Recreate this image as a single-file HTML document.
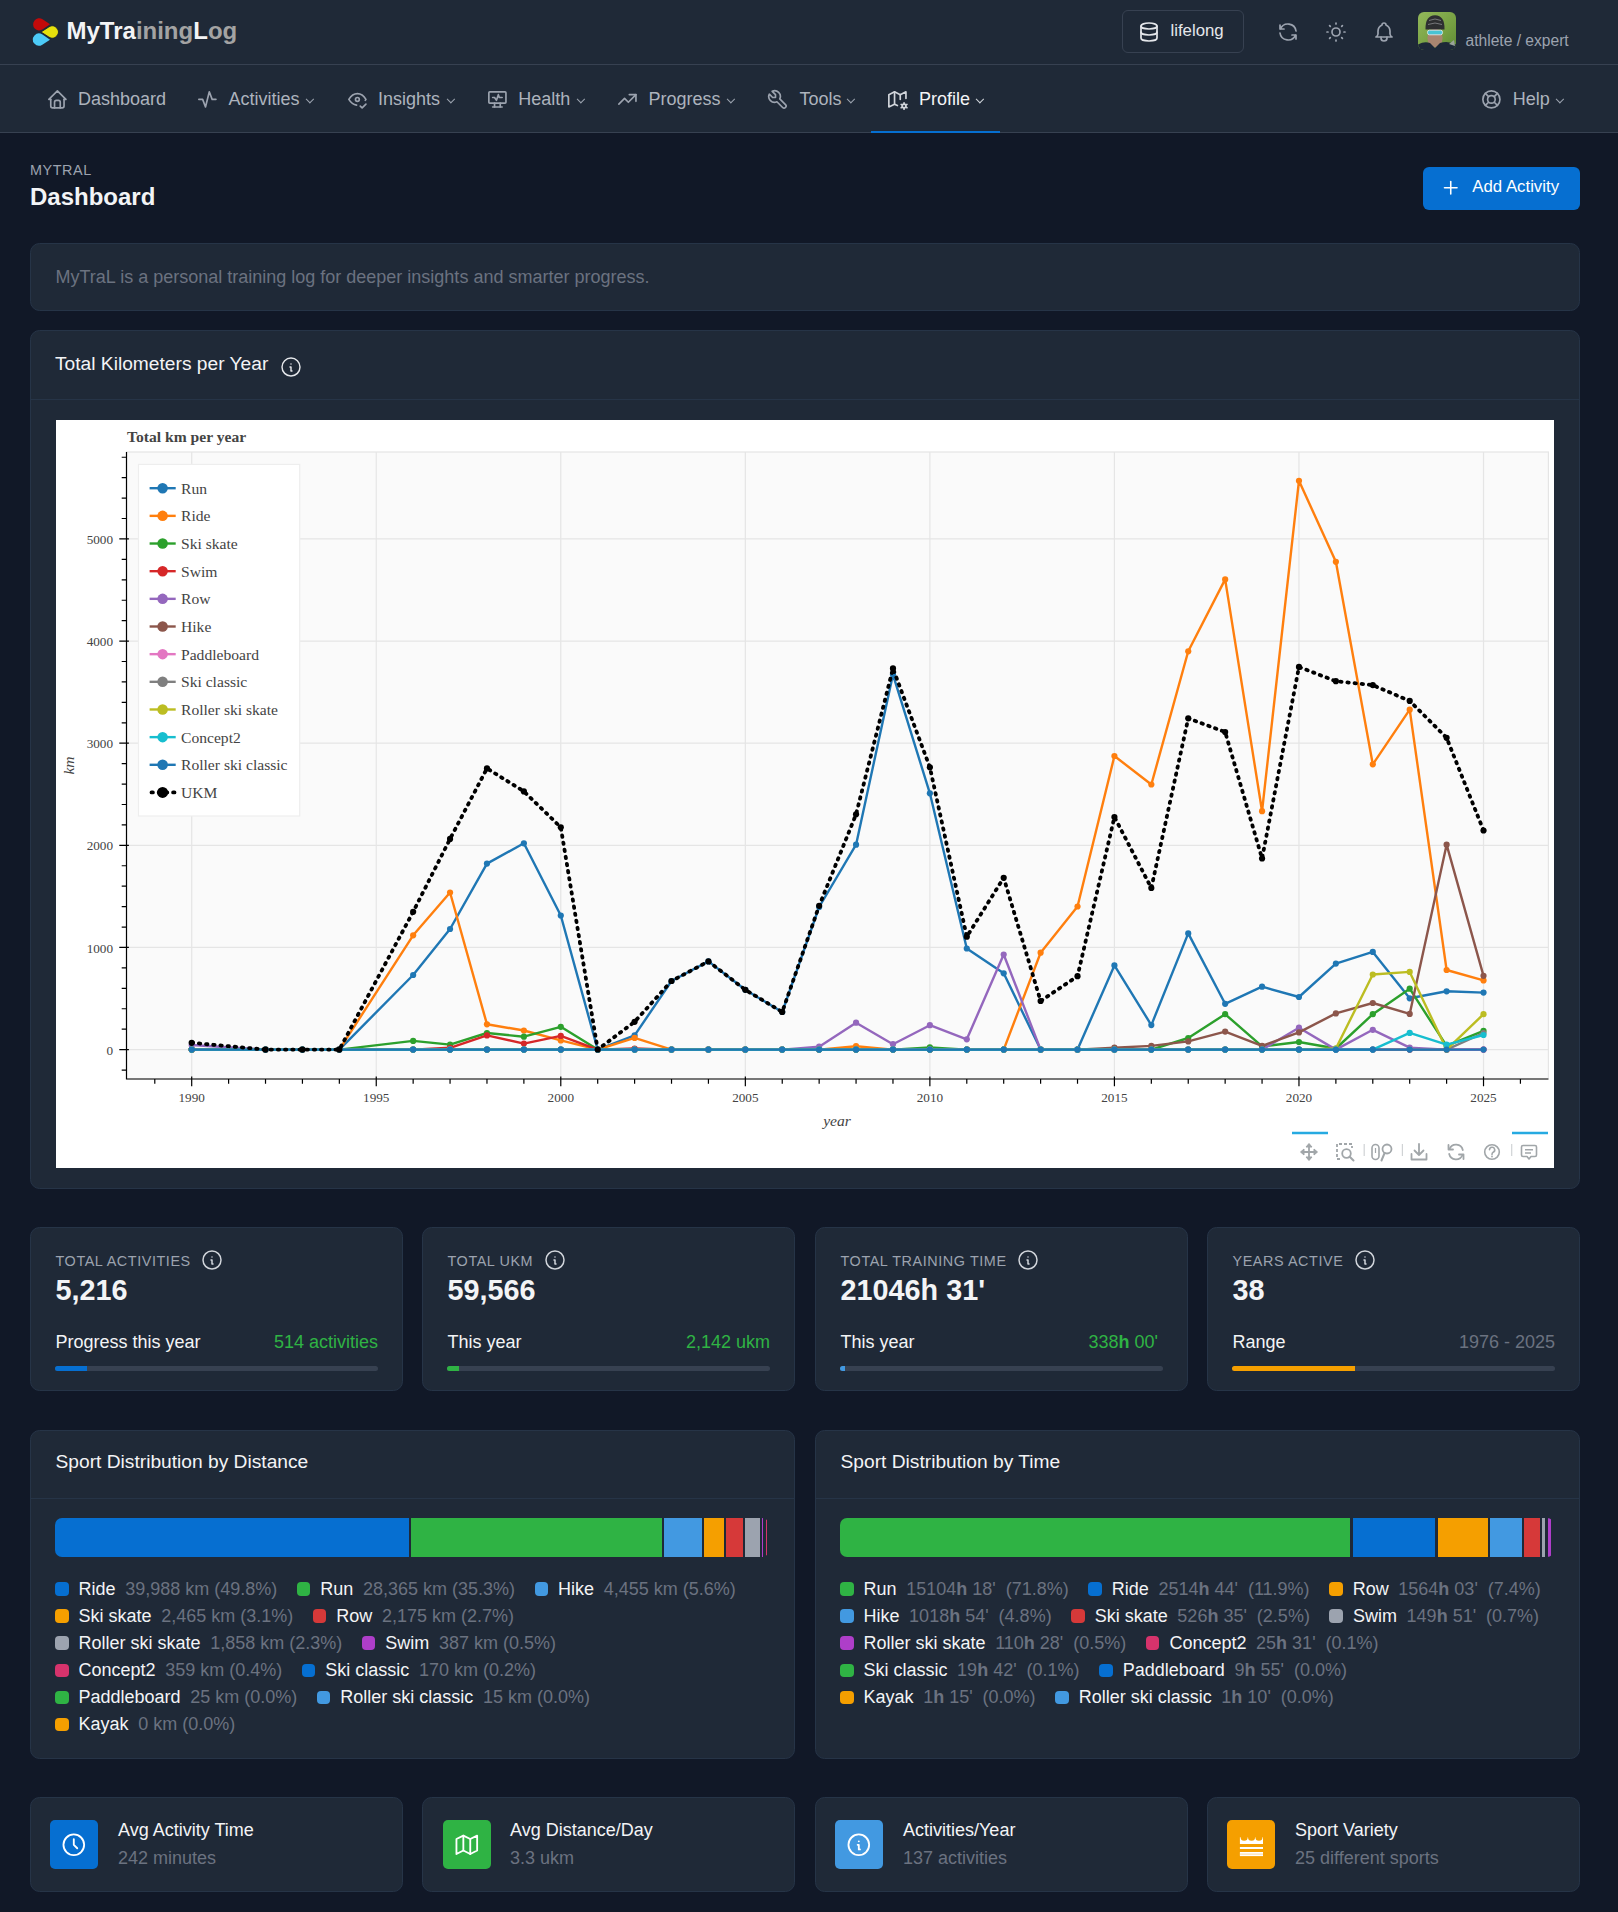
<!DOCTYPE html>
<html><head><meta charset="utf-8"><title>MyTrainingLog Dashboard</title>
<style>
html,body{margin:0;padding:0}
body{width:1618px;height:1912px;overflow:hidden;position:relative;background:#111827;font-family:'Liberation Sans', sans-serif;-webkit-font-smoothing:antialiased}
</style></head><body>
<div style="position:absolute;left:0px;top:0px;width:1618px;height:64px;background:#1f2937"></div>
<div style="position:absolute;left:0px;top:64px;width:1618px;height:1px;background:#374151"></div>
<div style="position:absolute;left:0px;top:65px;width:1618px;height:67px;background:#1f2937"></div>
<div style="position:absolute;left:0px;top:132px;width:1618px;height:1px;background:#374151"></div>
<svg style="position:absolute;left:0;top:0" width="80" height="64" viewBox="0 0 80 64"><path d="M50.00 24.20L42.74 29.37A6.1 6.1 0 1 1 42.55 19.30Z" fill="#c20a0a"/><path d="M50.00 39.70L42.29 44.64A6.1 6.1 0 1 1 42.47 34.49Z" fill="#4ccaf7"/><path d="M41.00 32.00L48.88 26.88A6.1 6.1 0 1 1 48.88 37.12Z" fill="#e5e00c" stroke="#172030" stroke-width="0.9"/></svg>
<div style="position:absolute;left:66.50px;top:18.88px;font-family:'Liberation Sans', sans-serif;font-size:24px;line-height:24px;font-weight:700;color:#f3f4f6;white-space:nowrap;"><span style="color:#f3f4f6">MyTra</span><span style="color:#a3a3a3">ining</span><span style="color:#f3f4f6">L</span><span style="color:#a3a3a3">og</span></div>
<div style="position:absolute;left:1122px;top:10px;width:122px;height:43px;box-sizing:border-box;border:1px solid #374151;border-radius:6px"></div>
<svg style="position:absolute;left:1137.00px;top:20.00px;" width="24" height="24" viewBox="0 0 24 24" fill="none" stroke="#e5e7eb" stroke-width="1.7" stroke-linecap="round" stroke-linejoin="round"><path d="M4 6a8 3 0 1 0 16 0a8 3 0 1 0 -16 0"/><path d="M4 6v6a8 3 0 0 0 16 0v-6"/><path d="M4 12v6a8 3 0 0 0 16 0v-6"/></svg>
<div style="position:absolute;left:1170.50px;top:22.58px;font-family:'Liberation Sans', sans-serif;font-size:16.8px;line-height:16.8px;font-weight:400;color:#e5e7eb;white-space:nowrap;">lifelong</div>
<svg style="position:absolute;left:1275.50px;top:20.00px;" width="24" height="24" viewBox="0 0 24 24" fill="none" stroke="#9ca3af" stroke-width="1.7" stroke-linecap="round" stroke-linejoin="round"><path d="M20 11a8.1 8.1 0 0 0 -15.5 -2m-.5 -4v4h4"/><path d="M4 13a8.1 8.1 0 0 0 15.5 2m.5 4v-4h-4"/></svg>
<svg style="position:absolute;left:1324.00px;top:20.00px;" width="24" height="24" viewBox="0 0 24 24" fill="none" stroke="#9ca3af" stroke-width="1.7" stroke-linecap="round" stroke-linejoin="round"><path d="M8 12a4 4 0 1 0 8 0a4 4 0 1 0 -8 0"/><path d="M3 12h1m8 -9v1m8 8h1m-9 8v1m-6.4 -15.4l.7 .7m12.1 -.7l-.7 .7m0 11.4l.7 .7m-12.1 -.7l-.7 .7"/></svg>
<svg style="position:absolute;left:1372.00px;top:20.00px;" width="24" height="24" viewBox="0 0 24 24" fill="none" stroke="#9ca3af" stroke-width="1.7" stroke-linecap="round" stroke-linejoin="round"><path d="M10 5a2 2 0 1 1 4 0a7 7 0 0 1 4 6v3a4 4 0 0 0 2 3h-16a4 4 0 0 0 2 -3v-3a7 7 0 0 1 4 -6"/><path d="M9 17v1a3 3 0 0 0 6 0v-1"/></svg>
<svg style="position:absolute;left:1418px;top:12px" width="38" height="38" viewBox="0 0 38 38"><defs><linearGradient id="gr" x1="0" y1="0" x2="1" y2="1"><stop offset="0" stop-color="#93b85a"/><stop offset="0.6" stop-color="#76a042"/><stop offset="1" stop-color="#5e8a34"/></linearGradient><clipPath id="avc"><rect width="38" height="38" rx="6"/></clipPath></defs><g clip-path="url(#avc)"><rect width="38" height="38" fill="url(#gr)"/><ellipse cx="17" cy="26" rx="7.6" ry="9.5" fill="#a88570"/><path d="M7.5 17.5Q7 3.5 17 3.2Q27 3.5 26.5 17.5Z" fill="#2e2f31"/><path d="M11 8.5Q17 5.5 23 8.5M10 12.5Q17 9.5 24 12.5" stroke="#77797c" stroke-width="1" fill="none"/><rect x="9.5" y="18.2" width="15" height="4.6" rx="2" fill="#48c4d4" stroke="#e8eef0" stroke-width="0.8"/><path d="M-1 39V33Q6 29 12 31L17 36L22 31Q30 28 39 33V39Z" fill="#1d2838"/><path d="M31 32l5 -4l1 6z" fill="#9aa39a"/></g></svg>
<div style="position:absolute;left:1465.50px;top:33.49px;font-family:'Liberation Sans', sans-serif;font-size:15.6px;line-height:15.6px;font-weight:400;color:#9ca3af;white-space:nowrap;">athlete / expert</div>
<svg style="position:absolute;left:45.80px;top:87.60px;" width="22.8" height="22.8" viewBox="0 0 24 24" fill="none" stroke="#9ca3af" stroke-width="1.75" stroke-linecap="round" stroke-linejoin="round"><path d="M5 12l-2 0l9 -9l9 9l-2 0"/><path d="M5 12v7a2 2 0 0 0 2 2h10a2 2 0 0 0 2 -2v-7"/><path d="M9 21v-6a2 2 0 0 1 2 -2h2a2 2 0 0 1 2 2v6"/></svg>
<div style="position:absolute;left:78.00px;top:89.76px;font-family:'Liberation Sans', sans-serif;font-size:18px;line-height:18px;font-weight:400;color:#adb3bd;white-space:nowrap;">Dashboard</div>
<svg style="position:absolute;left:195.60px;top:87.60px;" width="22.8" height="22.8" viewBox="0 0 24 24" fill="none" stroke="#9ca3af" stroke-width="1.75" stroke-linecap="round" stroke-linejoin="round"><path d="M3 12h4l3 8l4 -16l3 8h4"/></svg>
<div style="position:absolute;left:228.50px;top:89.76px;font-family:'Liberation Sans', sans-serif;font-size:18px;line-height:18px;font-weight:400;color:#adb3bd;white-space:nowrap;">Activities</div>
<div style="position:absolute;left:307.10px;top:95.50px;width:6.48px;height:6.48px;border-left:1.2px solid #9ca3af;border-bottom:1.2px solid #9ca3af;transform:rotate(-45deg);box-sizing:border-box"></div>
<svg style="position:absolute;left:346.00px;top:87.60px;" width="22.8" height="22.8" viewBox="0 0 24 24" fill="none" stroke="#9ca3af" stroke-width="1.75" stroke-linecap="round" stroke-linejoin="round"><path d="M10 12a2 2 0 1 0 4 0a2 2 0 0 0 -4 0"/><path d="M11.143 17.961c-3.221 -.295 -5.936 -2.281 -8.143 -5.961c2.4 -4 5.4 -6 9 -6c3.6 0 6.6 2 9 6c-.222 .37 -.449 .722 -.68 1.057"/><path d="M15 19l2 2l4 -4"/></svg>
<div style="position:absolute;left:378.00px;top:89.76px;font-family:'Liberation Sans', sans-serif;font-size:18px;line-height:18px;font-weight:400;color:#adb3bd;white-space:nowrap;">Insights</div>
<div style="position:absolute;left:447.80px;top:95.50px;width:6.48px;height:6.48px;border-left:1.2px solid #9ca3af;border-bottom:1.2px solid #9ca3af;transform:rotate(-45deg);box-sizing:border-box"></div>
<svg style="position:absolute;left:485.60px;top:87.60px;" width="22.8" height="22.8" viewBox="0 0 24 24" fill="none" stroke="#9ca3af" stroke-width="1.75" stroke-linecap="round" stroke-linejoin="round"><path d="M3 5a1 1 0 0 1 1 -1h16a1 1 0 0 1 1 1v10a1 1 0 0 1 -1 1h-16a1 1 0 0 1 -1 -1z"/><path d="M7 20h10"/><path d="M9 16v4"/><path d="M15 16v4"/><path d="M7 10h2l2 3l2 -6l1 3h3"/></svg>
<div style="position:absolute;left:518.30px;top:89.76px;font-family:'Liberation Sans', sans-serif;font-size:18px;line-height:18px;font-weight:400;color:#adb3bd;white-space:nowrap;">Health</div>
<div style="position:absolute;left:578.00px;top:95.50px;width:6.48px;height:6.48px;border-left:1.2px solid #9ca3af;border-bottom:1.2px solid #9ca3af;transform:rotate(-45deg);box-sizing:border-box"></div>
<svg style="position:absolute;left:615.60px;top:87.60px;" width="22.8" height="22.8" viewBox="0 0 24 24" fill="none" stroke="#9ca3af" stroke-width="1.75" stroke-linecap="round" stroke-linejoin="round"><path d="M3 17l6 -6l4 4l8 -8"/><path d="M14 7l7 0l0 7"/></svg>
<div style="position:absolute;left:648.60px;top:89.76px;font-family:'Liberation Sans', sans-serif;font-size:18px;line-height:18px;font-weight:400;color:#adb3bd;white-space:nowrap;">Progress</div>
<div style="position:absolute;left:727.60px;top:95.50px;width:6.48px;height:6.48px;border-left:1.2px solid #9ca3af;border-bottom:1.2px solid #9ca3af;transform:rotate(-45deg);box-sizing:border-box"></div>
<svg style="position:absolute;left:765.60px;top:87.60px;" width="22.8" height="22.8" viewBox="0 0 24 24" fill="none" stroke="#9ca3af" stroke-width="1.75" stroke-linecap="round" stroke-linejoin="round"><path d="M7 10h3v-3l-3.5 -3.5a6 6 0 0 1 8 8l6 6a2 2 0 0 1 -3 3l-6 -6a6 6 0 0 1 -8 -8l3.5 3.5"/></svg>
<div style="position:absolute;left:799.60px;top:89.76px;font-family:'Liberation Sans', sans-serif;font-size:18px;line-height:18px;font-weight:400;color:#adb3bd;white-space:nowrap;">Tools</div>
<div style="position:absolute;left:847.70px;top:95.50px;width:6.48px;height:6.48px;border-left:1.2px solid #9ca3af;border-bottom:1.2px solid #9ca3af;transform:rotate(-45deg);box-sizing:border-box"></div>
<svg style="position:absolute;left:885.60px;top:87.60px;" width="22.8" height="22.8" viewBox="0 0 24 24" fill="none" stroke="#d1d5db" stroke-width="1.75" stroke-linecap="round" stroke-linejoin="round"><path d="M12 18.5l-3 -1.5l-6 3v-13l6 -3l6 3l6 -3v7"/><path d="M9 4v13"/><path d="M15 7v5"/><path d="M17.001 19a2 2 0 1 0 4 0a2 2 0 1 0 -4 0"/><path d="M19.001 15.5v1.5"/><path d="M19.001 21v1.5"/><path d="M22.032 17.25l-1.299 .75"/><path d="M17.27 20l-1.3 .75"/><path d="M15.97 17.25l1.3 .75"/><path d="M20.733 20l1.3 .75"/></svg>
<div style="position:absolute;left:919.00px;top:89.76px;font-family:'Liberation Sans', sans-serif;font-size:18px;line-height:18px;font-weight:400;color:#f3f4f6;white-space:nowrap;">Profile</div>
<div style="position:absolute;left:977.00px;top:95.50px;width:6.48px;height:6.48px;border-left:1.2px solid #d1d5db;border-bottom:1.2px solid #d1d5db;transform:rotate(-45deg);box-sizing:border-box"></div>
<svg style="position:absolute;left:1479.60px;top:87.60px;" width="22.8" height="22.8" viewBox="0 0 24 24" fill="none" stroke="#9ca3af" stroke-width="1.75" stroke-linecap="round" stroke-linejoin="round"><path d="M8 12a4 4 0 1 0 8 0a4 4 0 1 0 -8 0"/><path d="M3 12a9 9 0 1 0 18 0a9 9 0 1 0 -18 0"/><path d="M15 15l3.35 3.35"/><path d="M9 15l-3.35 3.35"/><path d="M5.65 5.65l3.35 3.35"/><path d="M18.35 5.65l-3.35 3.35"/></svg>
<div style="position:absolute;left:1512.80px;top:89.76px;font-family:'Liberation Sans', sans-serif;font-size:18px;line-height:18px;font-weight:400;color:#adb3bd;white-space:nowrap;">Help</div>
<div style="position:absolute;left:1557.00px;top:95.50px;width:6.48px;height:6.48px;border-left:1.2px solid #9ca3af;border-bottom:1.2px solid #9ca3af;transform:rotate(-45deg);box-sizing:border-box"></div>
<div style="position:absolute;left:871px;top:131px;width:129px;height:2px;background:#066fd1"></div>
<div style="position:absolute;left:30.00px;top:162.71px;font-family:'Liberation Sans', sans-serif;font-size:14.4px;line-height:14.4px;font-weight:400;color:#9ca3af;white-space:nowrap;letter-spacing:0.576px">MYTRAL</div>
<div style="position:absolute;left:30.00px;top:184.68px;font-family:'Liberation Sans', sans-serif;font-size:24px;line-height:24px;font-weight:700;color:#f3f4f6;white-space:nowrap;">Dashboard</div>
<div style="position:absolute;left:1423px;top:167px;width:157px;height:43px;border-radius:6px;background:#066fd1"></div>
<svg style="position:absolute;left:1440.25px;top:177.25px;" width="21.5" height="21.5" viewBox="0 0 24 24" fill="none" stroke="#ffffff" stroke-width="1.75" stroke-linecap="round" stroke-linejoin="round"><path d="M12 5l0 14"/><path d="M5 12l14 0"/></svg>
<div style="position:absolute;left:1472.30px;top:178.58px;font-family:'Liberation Sans', sans-serif;font-size:16.8px;line-height:16.8px;font-weight:400;color:#ffffff;white-space:nowrap;">Add Activity</div>
<div style="position:absolute;left:30px;top:243px;width:1550px;height:68px;box-sizing:border-box;background:#1f2937;border:1px solid #263447;border-radius:9.6px"></div>
<div style="position:absolute;left:55.50px;top:268.16px;font-family:'Liberation Sans', sans-serif;font-size:18px;line-height:18px;font-weight:400;color:#6b7280;white-space:nowrap;">MyTraL is a personal training log for deeper insights and smarter progress.</div>
<div style="position:absolute;left:30px;top:330px;width:1550px;height:859px;box-sizing:border-box;background:#1f2937;border:1px solid #263447;border-radius:9.6px"></div>
<div style="position:absolute;left:55.00px;top:353.75px;font-family:'Liberation Sans', sans-serif;font-size:19.2px;line-height:19.2px;font-weight:400;color:#f3f4f6;white-space:nowrap;">Total Kilometers per Year</div>
<svg style="position:absolute;left:279.00px;top:355.00px;" width="24" height="24" viewBox="0 0 24 24" fill="none" stroke="#e5e7eb" stroke-width="1.45" stroke-linecap="round" stroke-linejoin="round"><path d="M3 12a9 9 0 1 0 18 0a9 9 0 0 0 -18 0"/><path d="M12 9h.01"/><path d="M11 12h1v4h1"/></svg>
<div style="position:absolute;left:31px;top:399px;width:1548px;height:1px;background:#263447"></div>
<div style="position:absolute;left:56px;top:420px;width:1498px;height:748px;background:#ffffff"></div>
<svg style="position:absolute;left:56px;top:420px" width="1498" height="748" viewBox="56 420 1498 748">
<rect x="56" y="420" width="1498" height="748" fill="#ffffff"/>
<rect x="126.5" y="452.0" width="1421.9" height="627.0" fill="#fafafa" stroke="#e5e5e5" stroke-width="1.2"/>
<path d="M191.70 452.0V1079.0M376.25 452.0V1079.0M560.79 452.0V1079.0M745.34 452.0V1079.0M929.88 452.0V1079.0M1114.42 452.0V1079.0M1298.97 452.0V1079.0M1483.52 452.0V1079.0M126.5 1049.60H1548.4M126.5 947.47H1548.4M126.5 845.34H1548.4M126.5 743.21H1548.4M126.5 641.08H1548.4M126.5 538.95H1548.4" stroke="#e5e5e5" stroke-width="1.2" fill="none"/>
<path d="M191.70 1049.60L265.52 1049.60L302.43 1049.60L339.34 1049.60L413.15 975.00L450.06 929.00L486.97 863.60L523.88 843.30L560.79 915.50L597.70 1049.60L634.61 1035.40L671.52 981.00L708.43 961.40L745.34 989.80L782.24 1012.00L819.15 907.00L856.06 844.70L892.97 674.60L929.88 793.30L966.79 948.50L1003.70 973.30L1040.61 1049.60L1077.52 1049.60L1114.42 965.40L1151.33 1025.10L1188.24 933.40L1225.15 1003.80L1262.06 986.70L1298.97 997.00L1335.88 963.60L1372.79 951.90L1409.70 998.30L1446.61 991.30L1483.52 992.60" stroke="#1f77b4" stroke-width="2.4" fill="none" stroke-linejoin="round"/>
<g fill="#1f77b4"><circle cx="191.70" cy="1049.60" r="3.1"/><circle cx="265.52" cy="1049.60" r="3.1"/><circle cx="302.43" cy="1049.60" r="3.1"/><circle cx="339.34" cy="1049.60" r="3.1"/><circle cx="413.15" cy="975.00" r="3.1"/><circle cx="450.06" cy="929.00" r="3.1"/><circle cx="486.97" cy="863.60" r="3.1"/><circle cx="523.88" cy="843.30" r="3.1"/><circle cx="560.79" cy="915.50" r="3.1"/><circle cx="597.70" cy="1049.60" r="3.1"/><circle cx="634.61" cy="1035.40" r="3.1"/><circle cx="671.52" cy="981.00" r="3.1"/><circle cx="708.43" cy="961.40" r="3.1"/><circle cx="745.34" cy="989.80" r="3.1"/><circle cx="782.24" cy="1012.00" r="3.1"/><circle cx="819.15" cy="907.00" r="3.1"/><circle cx="856.06" cy="844.70" r="3.1"/><circle cx="892.97" cy="674.60" r="3.1"/><circle cx="929.88" cy="793.30" r="3.1"/><circle cx="966.79" cy="948.50" r="3.1"/><circle cx="1003.70" cy="973.30" r="3.1"/><circle cx="1040.61" cy="1049.60" r="3.1"/><circle cx="1077.52" cy="1049.60" r="3.1"/><circle cx="1114.42" cy="965.40" r="3.1"/><circle cx="1151.33" cy="1025.10" r="3.1"/><circle cx="1188.24" cy="933.40" r="3.1"/><circle cx="1225.15" cy="1003.80" r="3.1"/><circle cx="1262.06" cy="986.70" r="3.1"/><circle cx="1298.97" cy="997.00" r="3.1"/><circle cx="1335.88" cy="963.60" r="3.1"/><circle cx="1372.79" cy="951.90" r="3.1"/><circle cx="1409.70" cy="998.30" r="3.1"/><circle cx="1446.61" cy="991.30" r="3.1"/><circle cx="1483.52" cy="992.60" r="3.1"/></g>
<path d="M191.70 1049.60L265.52 1049.60L302.43 1049.60L339.34 1049.60L413.15 935.30L450.06 892.50L486.97 1024.30L523.88 1030.50L560.79 1040.40L597.70 1049.60L634.61 1037.90L671.52 1049.60L708.43 1049.60L745.34 1049.60L782.24 1049.60L819.15 1049.60L856.06 1046.20L892.97 1049.60L929.88 1049.60L966.79 1049.60L1003.70 1049.60L1040.61 952.70L1077.52 906.50L1114.42 756.00L1151.33 784.50L1188.24 651.30L1225.15 579.40L1262.06 811.20L1298.97 480.80L1335.88 561.80L1372.79 764.30L1409.70 709.70L1446.61 970.00L1483.52 980.40" stroke="#ff7f0e" stroke-width="2.4" fill="none" stroke-linejoin="round"/>
<g fill="#ff7f0e"><circle cx="191.70" cy="1049.60" r="3.1"/><circle cx="265.52" cy="1049.60" r="3.1"/><circle cx="302.43" cy="1049.60" r="3.1"/><circle cx="339.34" cy="1049.60" r="3.1"/><circle cx="413.15" cy="935.30" r="3.1"/><circle cx="450.06" cy="892.50" r="3.1"/><circle cx="486.97" cy="1024.30" r="3.1"/><circle cx="523.88" cy="1030.50" r="3.1"/><circle cx="560.79" cy="1040.40" r="3.1"/><circle cx="597.70" cy="1049.60" r="3.1"/><circle cx="634.61" cy="1037.90" r="3.1"/><circle cx="671.52" cy="1049.60" r="3.1"/><circle cx="708.43" cy="1049.60" r="3.1"/><circle cx="745.34" cy="1049.60" r="3.1"/><circle cx="782.24" cy="1049.60" r="3.1"/><circle cx="819.15" cy="1049.60" r="3.1"/><circle cx="856.06" cy="1046.20" r="3.1"/><circle cx="892.97" cy="1049.60" r="3.1"/><circle cx="929.88" cy="1049.60" r="3.1"/><circle cx="966.79" cy="1049.60" r="3.1"/><circle cx="1003.70" cy="1049.60" r="3.1"/><circle cx="1040.61" cy="952.70" r="3.1"/><circle cx="1077.52" cy="906.50" r="3.1"/><circle cx="1114.42" cy="756.00" r="3.1"/><circle cx="1151.33" cy="784.50" r="3.1"/><circle cx="1188.24" cy="651.30" r="3.1"/><circle cx="1225.15" cy="579.40" r="3.1"/><circle cx="1262.06" cy="811.20" r="3.1"/><circle cx="1298.97" cy="480.80" r="3.1"/><circle cx="1335.88" cy="561.80" r="3.1"/><circle cx="1372.79" cy="764.30" r="3.1"/><circle cx="1409.70" cy="709.70" r="3.1"/><circle cx="1446.61" cy="970.00" r="3.1"/><circle cx="1483.52" cy="980.40" r="3.1"/></g>
<path d="M191.70 1049.60L265.52 1049.60L302.43 1049.60L339.34 1049.60L413.15 1040.90L450.06 1044.60L486.97 1033.00L523.88 1036.70L560.79 1026.80L597.70 1049.60L634.61 1049.60L671.52 1049.60L708.43 1049.60L745.34 1049.60L782.24 1049.60L819.15 1049.60L856.06 1049.60L892.97 1049.60L929.88 1047.40L966.79 1049.60L1003.70 1049.60L1040.61 1049.60L1077.52 1049.60L1114.42 1049.60L1151.33 1049.60L1188.24 1038.00L1225.15 1014.20L1262.06 1046.40L1298.97 1042.00L1335.88 1048.50L1372.79 1014.20L1409.70 988.70L1446.61 1045.90L1483.52 1030.80" stroke="#2ca02c" stroke-width="2.4" fill="none" stroke-linejoin="round"/>
<g fill="#2ca02c"><circle cx="191.70" cy="1049.60" r="3.1"/><circle cx="265.52" cy="1049.60" r="3.1"/><circle cx="302.43" cy="1049.60" r="3.1"/><circle cx="339.34" cy="1049.60" r="3.1"/><circle cx="413.15" cy="1040.90" r="3.1"/><circle cx="450.06" cy="1044.60" r="3.1"/><circle cx="486.97" cy="1033.00" r="3.1"/><circle cx="523.88" cy="1036.70" r="3.1"/><circle cx="560.79" cy="1026.80" r="3.1"/><circle cx="597.70" cy="1049.60" r="3.1"/><circle cx="634.61" cy="1049.60" r="3.1"/><circle cx="671.52" cy="1049.60" r="3.1"/><circle cx="708.43" cy="1049.60" r="3.1"/><circle cx="745.34" cy="1049.60" r="3.1"/><circle cx="782.24" cy="1049.60" r="3.1"/><circle cx="819.15" cy="1049.60" r="3.1"/><circle cx="856.06" cy="1049.60" r="3.1"/><circle cx="892.97" cy="1049.60" r="3.1"/><circle cx="929.88" cy="1047.40" r="3.1"/><circle cx="966.79" cy="1049.60" r="3.1"/><circle cx="1003.70" cy="1049.60" r="3.1"/><circle cx="1040.61" cy="1049.60" r="3.1"/><circle cx="1077.52" cy="1049.60" r="3.1"/><circle cx="1114.42" cy="1049.60" r="3.1"/><circle cx="1151.33" cy="1049.60" r="3.1"/><circle cx="1188.24" cy="1038.00" r="3.1"/><circle cx="1225.15" cy="1014.20" r="3.1"/><circle cx="1262.06" cy="1046.40" r="3.1"/><circle cx="1298.97" cy="1042.00" r="3.1"/><circle cx="1335.88" cy="1048.50" r="3.1"/><circle cx="1372.79" cy="1014.20" r="3.1"/><circle cx="1409.70" cy="988.70" r="3.1"/><circle cx="1446.61" cy="1045.90" r="3.1"/><circle cx="1483.52" cy="1030.80" r="3.1"/></g>
<path d="M191.70 1049.60L265.52 1049.60L302.43 1049.60L339.34 1049.60L413.15 1049.60L450.06 1047.80L486.97 1035.40L523.88 1043.60L560.79 1035.90L597.70 1049.60L634.61 1048.50L671.52 1049.60L708.43 1049.60L745.34 1049.60L782.24 1049.60L819.15 1049.60L856.06 1049.60L892.97 1049.60L929.88 1049.60L966.79 1049.60L1003.70 1049.60L1040.61 1049.60L1077.52 1049.60L1114.42 1049.60L1151.33 1049.60L1188.24 1049.60L1225.15 1049.60L1262.06 1049.60L1298.97 1049.60L1335.88 1049.60L1372.79 1049.60L1409.70 1049.60L1446.61 1049.60L1483.52 1049.60" stroke="#d62728" stroke-width="2.4" fill="none" stroke-linejoin="round"/>
<g fill="#d62728"><circle cx="191.70" cy="1049.60" r="3.1"/><circle cx="265.52" cy="1049.60" r="3.1"/><circle cx="302.43" cy="1049.60" r="3.1"/><circle cx="339.34" cy="1049.60" r="3.1"/><circle cx="413.15" cy="1049.60" r="3.1"/><circle cx="450.06" cy="1047.80" r="3.1"/><circle cx="486.97" cy="1035.40" r="3.1"/><circle cx="523.88" cy="1043.60" r="3.1"/><circle cx="560.79" cy="1035.90" r="3.1"/><circle cx="597.70" cy="1049.60" r="3.1"/><circle cx="634.61" cy="1048.50" r="3.1"/><circle cx="671.52" cy="1049.60" r="3.1"/><circle cx="708.43" cy="1049.60" r="3.1"/><circle cx="745.34" cy="1049.60" r="3.1"/><circle cx="782.24" cy="1049.60" r="3.1"/><circle cx="819.15" cy="1049.60" r="3.1"/><circle cx="856.06" cy="1049.60" r="3.1"/><circle cx="892.97" cy="1049.60" r="3.1"/><circle cx="929.88" cy="1049.60" r="3.1"/><circle cx="966.79" cy="1049.60" r="3.1"/><circle cx="1003.70" cy="1049.60" r="3.1"/><circle cx="1040.61" cy="1049.60" r="3.1"/><circle cx="1077.52" cy="1049.60" r="3.1"/><circle cx="1114.42" cy="1049.60" r="3.1"/><circle cx="1151.33" cy="1049.60" r="3.1"/><circle cx="1188.24" cy="1049.60" r="3.1"/><circle cx="1225.15" cy="1049.60" r="3.1"/><circle cx="1262.06" cy="1049.60" r="3.1"/><circle cx="1298.97" cy="1049.60" r="3.1"/><circle cx="1335.88" cy="1049.60" r="3.1"/><circle cx="1372.79" cy="1049.60" r="3.1"/><circle cx="1409.70" cy="1049.60" r="3.1"/><circle cx="1446.61" cy="1049.60" r="3.1"/><circle cx="1483.52" cy="1049.60" r="3.1"/></g>
<path d="M191.70 1045.00L265.52 1049.60L302.43 1049.60L339.34 1049.60L413.15 1049.60L450.06 1049.60L486.97 1049.60L523.88 1049.60L560.79 1049.60L597.70 1049.60L634.61 1049.60L671.52 1049.60L708.43 1049.60L745.34 1049.60L782.24 1049.60L819.15 1046.70L856.06 1022.70L892.97 1044.20L929.88 1025.20L966.79 1039.30L1003.70 954.50L1040.61 1049.60L1077.52 1049.60L1114.42 1049.60L1151.33 1049.60L1188.24 1049.60L1225.15 1049.60L1262.06 1049.60L1298.97 1027.70L1335.88 1049.60L1372.79 1029.80L1409.70 1047.70L1446.61 1049.60L1483.52 1049.60" stroke="#9467bd" stroke-width="2.4" fill="none" stroke-linejoin="round"/>
<g fill="#9467bd"><circle cx="191.70" cy="1045.00" r="3.1"/><circle cx="265.52" cy="1049.60" r="3.1"/><circle cx="302.43" cy="1049.60" r="3.1"/><circle cx="339.34" cy="1049.60" r="3.1"/><circle cx="413.15" cy="1049.60" r="3.1"/><circle cx="450.06" cy="1049.60" r="3.1"/><circle cx="486.97" cy="1049.60" r="3.1"/><circle cx="523.88" cy="1049.60" r="3.1"/><circle cx="560.79" cy="1049.60" r="3.1"/><circle cx="597.70" cy="1049.60" r="3.1"/><circle cx="634.61" cy="1049.60" r="3.1"/><circle cx="671.52" cy="1049.60" r="3.1"/><circle cx="708.43" cy="1049.60" r="3.1"/><circle cx="745.34" cy="1049.60" r="3.1"/><circle cx="782.24" cy="1049.60" r="3.1"/><circle cx="819.15" cy="1046.70" r="3.1"/><circle cx="856.06" cy="1022.70" r="3.1"/><circle cx="892.97" cy="1044.20" r="3.1"/><circle cx="929.88" cy="1025.20" r="3.1"/><circle cx="966.79" cy="1039.30" r="3.1"/><circle cx="1003.70" cy="954.50" r="3.1"/><circle cx="1040.61" cy="1049.60" r="3.1"/><circle cx="1077.52" cy="1049.60" r="3.1"/><circle cx="1114.42" cy="1049.60" r="3.1"/><circle cx="1151.33" cy="1049.60" r="3.1"/><circle cx="1188.24" cy="1049.60" r="3.1"/><circle cx="1225.15" cy="1049.60" r="3.1"/><circle cx="1262.06" cy="1049.60" r="3.1"/><circle cx="1298.97" cy="1027.70" r="3.1"/><circle cx="1335.88" cy="1049.60" r="3.1"/><circle cx="1372.79" cy="1029.80" r="3.1"/><circle cx="1409.70" cy="1047.70" r="3.1"/><circle cx="1446.61" cy="1049.60" r="3.1"/><circle cx="1483.52" cy="1049.60" r="3.1"/></g>
<path d="M191.70 1049.60L265.52 1049.60L302.43 1049.60L339.34 1049.60L413.15 1049.60L450.06 1049.60L486.97 1049.60L523.88 1049.60L560.79 1049.60L597.70 1049.60L634.61 1049.60L671.52 1049.60L708.43 1049.60L745.34 1049.60L782.24 1049.60L819.15 1049.60L856.06 1049.60L892.97 1049.60L929.88 1049.60L966.79 1049.60L1003.70 1049.60L1040.61 1049.60L1077.52 1049.60L1114.42 1047.70L1151.33 1045.90L1188.24 1041.40L1225.15 1031.60L1262.06 1045.90L1298.97 1032.40L1335.88 1013.40L1372.79 1003.00L1409.70 1013.90L1446.61 844.70L1483.52 975.80" stroke="#8c564b" stroke-width="2.4" fill="none" stroke-linejoin="round"/>
<g fill="#8c564b"><circle cx="191.70" cy="1049.60" r="3.1"/><circle cx="265.52" cy="1049.60" r="3.1"/><circle cx="302.43" cy="1049.60" r="3.1"/><circle cx="339.34" cy="1049.60" r="3.1"/><circle cx="413.15" cy="1049.60" r="3.1"/><circle cx="450.06" cy="1049.60" r="3.1"/><circle cx="486.97" cy="1049.60" r="3.1"/><circle cx="523.88" cy="1049.60" r="3.1"/><circle cx="560.79" cy="1049.60" r="3.1"/><circle cx="597.70" cy="1049.60" r="3.1"/><circle cx="634.61" cy="1049.60" r="3.1"/><circle cx="671.52" cy="1049.60" r="3.1"/><circle cx="708.43" cy="1049.60" r="3.1"/><circle cx="745.34" cy="1049.60" r="3.1"/><circle cx="782.24" cy="1049.60" r="3.1"/><circle cx="819.15" cy="1049.60" r="3.1"/><circle cx="856.06" cy="1049.60" r="3.1"/><circle cx="892.97" cy="1049.60" r="3.1"/><circle cx="929.88" cy="1049.60" r="3.1"/><circle cx="966.79" cy="1049.60" r="3.1"/><circle cx="1003.70" cy="1049.60" r="3.1"/><circle cx="1040.61" cy="1049.60" r="3.1"/><circle cx="1077.52" cy="1049.60" r="3.1"/><circle cx="1114.42" cy="1047.70" r="3.1"/><circle cx="1151.33" cy="1045.90" r="3.1"/><circle cx="1188.24" cy="1041.40" r="3.1"/><circle cx="1225.15" cy="1031.60" r="3.1"/><circle cx="1262.06" cy="1045.90" r="3.1"/><circle cx="1298.97" cy="1032.40" r="3.1"/><circle cx="1335.88" cy="1013.40" r="3.1"/><circle cx="1372.79" cy="1003.00" r="3.1"/><circle cx="1409.70" cy="1013.90" r="3.1"/><circle cx="1446.61" cy="844.70" r="3.1"/><circle cx="1483.52" cy="975.80" r="3.1"/></g>
<path d="M191.70 1049.60L265.52 1049.60L302.43 1049.60L339.34 1049.60L413.15 1049.60L450.06 1049.60L486.97 1049.60L523.88 1049.60L560.79 1049.60L597.70 1049.60L634.61 1049.60L671.52 1049.60L708.43 1049.60L745.34 1049.60L782.24 1049.60L819.15 1049.60L856.06 1049.60L892.97 1049.60L929.88 1049.60L966.79 1049.60L1003.70 1049.60L1040.61 1049.60L1077.52 1049.60L1114.42 1049.60L1151.33 1049.60L1188.24 1049.60L1225.15 1049.60L1262.06 1049.60L1298.97 1049.60L1335.88 1049.60L1372.79 1049.60L1409.70 1049.60L1446.61 1049.60L1483.52 1049.60" stroke="#e377c2" stroke-width="2.4" fill="none" stroke-linejoin="round"/>
<g fill="#e377c2"><circle cx="191.70" cy="1049.60" r="3.1"/><circle cx="265.52" cy="1049.60" r="3.1"/><circle cx="302.43" cy="1049.60" r="3.1"/><circle cx="339.34" cy="1049.60" r="3.1"/><circle cx="413.15" cy="1049.60" r="3.1"/><circle cx="450.06" cy="1049.60" r="3.1"/><circle cx="486.97" cy="1049.60" r="3.1"/><circle cx="523.88" cy="1049.60" r="3.1"/><circle cx="560.79" cy="1049.60" r="3.1"/><circle cx="597.70" cy="1049.60" r="3.1"/><circle cx="634.61" cy="1049.60" r="3.1"/><circle cx="671.52" cy="1049.60" r="3.1"/><circle cx="708.43" cy="1049.60" r="3.1"/><circle cx="745.34" cy="1049.60" r="3.1"/><circle cx="782.24" cy="1049.60" r="3.1"/><circle cx="819.15" cy="1049.60" r="3.1"/><circle cx="856.06" cy="1049.60" r="3.1"/><circle cx="892.97" cy="1049.60" r="3.1"/><circle cx="929.88" cy="1049.60" r="3.1"/><circle cx="966.79" cy="1049.60" r="3.1"/><circle cx="1003.70" cy="1049.60" r="3.1"/><circle cx="1040.61" cy="1049.60" r="3.1"/><circle cx="1077.52" cy="1049.60" r="3.1"/><circle cx="1114.42" cy="1049.60" r="3.1"/><circle cx="1151.33" cy="1049.60" r="3.1"/><circle cx="1188.24" cy="1049.60" r="3.1"/><circle cx="1225.15" cy="1049.60" r="3.1"/><circle cx="1262.06" cy="1049.60" r="3.1"/><circle cx="1298.97" cy="1049.60" r="3.1"/><circle cx="1335.88" cy="1049.60" r="3.1"/><circle cx="1372.79" cy="1049.60" r="3.1"/><circle cx="1409.70" cy="1049.60" r="3.1"/><circle cx="1446.61" cy="1049.60" r="3.1"/><circle cx="1483.52" cy="1049.60" r="3.1"/></g>
<path d="M191.70 1049.60L265.52 1049.60L302.43 1049.60L339.34 1049.60L413.15 1049.60L450.06 1049.60L486.97 1049.60L523.88 1049.60L560.79 1049.60L597.70 1049.60L634.61 1049.60L671.52 1049.60L708.43 1049.60L745.34 1049.60L782.24 1049.60L819.15 1049.60L856.06 1049.60L892.97 1049.60L929.88 1049.60L966.79 1049.60L1003.70 1049.60L1040.61 1049.60L1077.52 1049.60L1114.42 1049.60L1151.33 1049.60L1188.24 1049.60L1225.15 1049.60L1262.06 1049.60L1298.97 1049.60L1335.88 1049.60L1372.79 1049.60L1409.70 1049.60L1446.61 1049.60L1483.52 1033.00" stroke="#7f7f7f" stroke-width="2.4" fill="none" stroke-linejoin="round"/>
<g fill="#7f7f7f"><circle cx="191.70" cy="1049.60" r="3.1"/><circle cx="265.52" cy="1049.60" r="3.1"/><circle cx="302.43" cy="1049.60" r="3.1"/><circle cx="339.34" cy="1049.60" r="3.1"/><circle cx="413.15" cy="1049.60" r="3.1"/><circle cx="450.06" cy="1049.60" r="3.1"/><circle cx="486.97" cy="1049.60" r="3.1"/><circle cx="523.88" cy="1049.60" r="3.1"/><circle cx="560.79" cy="1049.60" r="3.1"/><circle cx="597.70" cy="1049.60" r="3.1"/><circle cx="634.61" cy="1049.60" r="3.1"/><circle cx="671.52" cy="1049.60" r="3.1"/><circle cx="708.43" cy="1049.60" r="3.1"/><circle cx="745.34" cy="1049.60" r="3.1"/><circle cx="782.24" cy="1049.60" r="3.1"/><circle cx="819.15" cy="1049.60" r="3.1"/><circle cx="856.06" cy="1049.60" r="3.1"/><circle cx="892.97" cy="1049.60" r="3.1"/><circle cx="929.88" cy="1049.60" r="3.1"/><circle cx="966.79" cy="1049.60" r="3.1"/><circle cx="1003.70" cy="1049.60" r="3.1"/><circle cx="1040.61" cy="1049.60" r="3.1"/><circle cx="1077.52" cy="1049.60" r="3.1"/><circle cx="1114.42" cy="1049.60" r="3.1"/><circle cx="1151.33" cy="1049.60" r="3.1"/><circle cx="1188.24" cy="1049.60" r="3.1"/><circle cx="1225.15" cy="1049.60" r="3.1"/><circle cx="1262.06" cy="1049.60" r="3.1"/><circle cx="1298.97" cy="1049.60" r="3.1"/><circle cx="1335.88" cy="1049.60" r="3.1"/><circle cx="1372.79" cy="1049.60" r="3.1"/><circle cx="1409.70" cy="1049.60" r="3.1"/><circle cx="1446.61" cy="1049.60" r="3.1"/><circle cx="1483.52" cy="1033.00" r="3.1"/></g>
<path d="M191.70 1049.60L265.52 1049.60L302.43 1049.60L339.34 1049.60L413.15 1049.60L450.06 1049.60L486.97 1049.60L523.88 1049.60L560.79 1049.60L597.70 1049.60L634.61 1049.60L671.52 1049.60L708.43 1049.60L745.34 1049.60L782.24 1049.60L819.15 1049.60L856.06 1049.60L892.97 1049.60L929.88 1049.60L966.79 1049.60L1003.70 1049.60L1040.61 1049.60L1077.52 1049.60L1114.42 1049.60L1151.33 1049.60L1188.24 1049.60L1225.15 1049.60L1262.06 1049.60L1298.97 1049.60L1335.88 1048.50L1372.79 974.50L1409.70 971.90L1446.61 1049.60L1483.52 1014.20" stroke="#bcbd22" stroke-width="2.4" fill="none" stroke-linejoin="round"/>
<g fill="#bcbd22"><circle cx="191.70" cy="1049.60" r="3.1"/><circle cx="265.52" cy="1049.60" r="3.1"/><circle cx="302.43" cy="1049.60" r="3.1"/><circle cx="339.34" cy="1049.60" r="3.1"/><circle cx="413.15" cy="1049.60" r="3.1"/><circle cx="450.06" cy="1049.60" r="3.1"/><circle cx="486.97" cy="1049.60" r="3.1"/><circle cx="523.88" cy="1049.60" r="3.1"/><circle cx="560.79" cy="1049.60" r="3.1"/><circle cx="597.70" cy="1049.60" r="3.1"/><circle cx="634.61" cy="1049.60" r="3.1"/><circle cx="671.52" cy="1049.60" r="3.1"/><circle cx="708.43" cy="1049.60" r="3.1"/><circle cx="745.34" cy="1049.60" r="3.1"/><circle cx="782.24" cy="1049.60" r="3.1"/><circle cx="819.15" cy="1049.60" r="3.1"/><circle cx="856.06" cy="1049.60" r="3.1"/><circle cx="892.97" cy="1049.60" r="3.1"/><circle cx="929.88" cy="1049.60" r="3.1"/><circle cx="966.79" cy="1049.60" r="3.1"/><circle cx="1003.70" cy="1049.60" r="3.1"/><circle cx="1040.61" cy="1049.60" r="3.1"/><circle cx="1077.52" cy="1049.60" r="3.1"/><circle cx="1114.42" cy="1049.60" r="3.1"/><circle cx="1151.33" cy="1049.60" r="3.1"/><circle cx="1188.24" cy="1049.60" r="3.1"/><circle cx="1225.15" cy="1049.60" r="3.1"/><circle cx="1262.06" cy="1049.60" r="3.1"/><circle cx="1298.97" cy="1049.60" r="3.1"/><circle cx="1335.88" cy="1048.50" r="3.1"/><circle cx="1372.79" cy="974.50" r="3.1"/><circle cx="1409.70" cy="971.90" r="3.1"/><circle cx="1446.61" cy="1049.60" r="3.1"/><circle cx="1483.52" cy="1014.20" r="3.1"/></g>
<path d="M191.70 1049.60L265.52 1049.60L302.43 1049.60L339.34 1049.60L413.15 1049.60L450.06 1049.60L486.97 1049.60L523.88 1049.60L560.79 1049.60L597.70 1049.60L634.61 1049.60L671.52 1049.60L708.43 1049.60L745.34 1049.60L782.24 1049.60L819.15 1049.60L856.06 1049.60L892.97 1049.60L929.88 1049.60L966.79 1049.60L1003.70 1049.60L1040.61 1049.60L1077.52 1049.60L1114.42 1049.60L1151.33 1049.60L1188.24 1049.60L1225.15 1049.60L1262.06 1049.60L1298.97 1049.60L1335.88 1049.60L1372.79 1049.60L1409.70 1032.90L1446.61 1044.60L1483.52 1035.00" stroke="#17becf" stroke-width="2.4" fill="none" stroke-linejoin="round"/>
<g fill="#17becf"><circle cx="191.70" cy="1049.60" r="3.1"/><circle cx="265.52" cy="1049.60" r="3.1"/><circle cx="302.43" cy="1049.60" r="3.1"/><circle cx="339.34" cy="1049.60" r="3.1"/><circle cx="413.15" cy="1049.60" r="3.1"/><circle cx="450.06" cy="1049.60" r="3.1"/><circle cx="486.97" cy="1049.60" r="3.1"/><circle cx="523.88" cy="1049.60" r="3.1"/><circle cx="560.79" cy="1049.60" r="3.1"/><circle cx="597.70" cy="1049.60" r="3.1"/><circle cx="634.61" cy="1049.60" r="3.1"/><circle cx="671.52" cy="1049.60" r="3.1"/><circle cx="708.43" cy="1049.60" r="3.1"/><circle cx="745.34" cy="1049.60" r="3.1"/><circle cx="782.24" cy="1049.60" r="3.1"/><circle cx="819.15" cy="1049.60" r="3.1"/><circle cx="856.06" cy="1049.60" r="3.1"/><circle cx="892.97" cy="1049.60" r="3.1"/><circle cx="929.88" cy="1049.60" r="3.1"/><circle cx="966.79" cy="1049.60" r="3.1"/><circle cx="1003.70" cy="1049.60" r="3.1"/><circle cx="1040.61" cy="1049.60" r="3.1"/><circle cx="1077.52" cy="1049.60" r="3.1"/><circle cx="1114.42" cy="1049.60" r="3.1"/><circle cx="1151.33" cy="1049.60" r="3.1"/><circle cx="1188.24" cy="1049.60" r="3.1"/><circle cx="1225.15" cy="1049.60" r="3.1"/><circle cx="1262.06" cy="1049.60" r="3.1"/><circle cx="1298.97" cy="1049.60" r="3.1"/><circle cx="1335.88" cy="1049.60" r="3.1"/><circle cx="1372.79" cy="1049.60" r="3.1"/><circle cx="1409.70" cy="1032.90" r="3.1"/><circle cx="1446.61" cy="1044.60" r="3.1"/><circle cx="1483.52" cy="1035.00" r="3.1"/></g>
<path d="M191.70 1049.60L265.52 1049.60L302.43 1049.60L339.34 1049.60L413.15 1049.60L450.06 1049.60L486.97 1049.60L523.88 1049.60L560.79 1049.60L597.70 1049.60L634.61 1049.60L671.52 1049.60L708.43 1049.60L745.34 1049.60L782.24 1049.60L819.15 1049.60L856.06 1049.60L892.97 1049.60L929.88 1049.60L966.79 1049.60L1003.70 1049.60L1040.61 1049.60L1077.52 1049.60L1114.42 1049.60L1151.33 1049.60L1188.24 1049.60L1225.15 1049.60L1262.06 1049.60L1298.97 1049.60L1335.88 1049.60L1372.79 1049.60L1409.70 1049.60L1446.61 1049.60L1483.52 1049.60" stroke="#1f77b4" stroke-width="2.4" fill="none" stroke-linejoin="round"/>
<g fill="#1f77b4"><circle cx="191.70" cy="1049.60" r="3.1"/><circle cx="265.52" cy="1049.60" r="3.1"/><circle cx="302.43" cy="1049.60" r="3.1"/><circle cx="339.34" cy="1049.60" r="3.1"/><circle cx="413.15" cy="1049.60" r="3.1"/><circle cx="450.06" cy="1049.60" r="3.1"/><circle cx="486.97" cy="1049.60" r="3.1"/><circle cx="523.88" cy="1049.60" r="3.1"/><circle cx="560.79" cy="1049.60" r="3.1"/><circle cx="597.70" cy="1049.60" r="3.1"/><circle cx="634.61" cy="1049.60" r="3.1"/><circle cx="671.52" cy="1049.60" r="3.1"/><circle cx="708.43" cy="1049.60" r="3.1"/><circle cx="745.34" cy="1049.60" r="3.1"/><circle cx="782.24" cy="1049.60" r="3.1"/><circle cx="819.15" cy="1049.60" r="3.1"/><circle cx="856.06" cy="1049.60" r="3.1"/><circle cx="892.97" cy="1049.60" r="3.1"/><circle cx="929.88" cy="1049.60" r="3.1"/><circle cx="966.79" cy="1049.60" r="3.1"/><circle cx="1003.70" cy="1049.60" r="3.1"/><circle cx="1040.61" cy="1049.60" r="3.1"/><circle cx="1077.52" cy="1049.60" r="3.1"/><circle cx="1114.42" cy="1049.60" r="3.1"/><circle cx="1151.33" cy="1049.60" r="3.1"/><circle cx="1188.24" cy="1049.60" r="3.1"/><circle cx="1225.15" cy="1049.60" r="3.1"/><circle cx="1262.06" cy="1049.60" r="3.1"/><circle cx="1298.97" cy="1049.60" r="3.1"/><circle cx="1335.88" cy="1049.60" r="3.1"/><circle cx="1372.79" cy="1049.60" r="3.1"/><circle cx="1409.70" cy="1049.60" r="3.1"/><circle cx="1446.61" cy="1049.60" r="3.1"/><circle cx="1483.52" cy="1049.60" r="3.1"/></g>
<path d="M191.70 1042.80L265.52 1049.60L302.43 1049.60L339.34 1049.60L413.15 911.80L450.06 838.90L486.97 768.40L523.88 791.40L560.79 827.30L597.70 1049.50L634.61 1021.80L671.52 981.00L708.43 961.40L745.34 989.80L782.24 1012.00L819.15 905.80L856.06 814.30L892.97 668.40L929.88 767.30L966.79 936.70L1003.70 877.80L1040.61 1001.00L1077.52 976.20L1114.42 817.00L1151.33 888.00L1188.24 718.30L1225.15 732.00L1262.06 858.50L1298.97 666.90L1335.88 681.20L1372.79 685.10L1409.70 700.90L1446.61 737.80L1483.52 830.50" stroke="#000" stroke-width="3.8" fill="none" stroke-dasharray="1.4 5.8" stroke-linecap="round" stroke-linejoin="round"/>
<g fill="#000"><circle cx="191.70" cy="1042.80" r="3.1"/><circle cx="265.52" cy="1049.60" r="3.1"/><circle cx="302.43" cy="1049.60" r="3.1"/><circle cx="339.34" cy="1049.60" r="3.1"/><circle cx="413.15" cy="911.80" r="3.1"/><circle cx="450.06" cy="838.90" r="3.1"/><circle cx="486.97" cy="768.40" r="3.1"/><circle cx="523.88" cy="791.40" r="3.1"/><circle cx="560.79" cy="827.30" r="3.1"/><circle cx="597.70" cy="1049.50" r="3.1"/><circle cx="634.61" cy="1021.80" r="3.1"/><circle cx="671.52" cy="981.00" r="3.1"/><circle cx="708.43" cy="961.40" r="3.1"/><circle cx="745.34" cy="989.80" r="3.1"/><circle cx="782.24" cy="1012.00" r="3.1"/><circle cx="819.15" cy="905.80" r="3.1"/><circle cx="856.06" cy="814.30" r="3.1"/><circle cx="892.97" cy="668.40" r="3.1"/><circle cx="929.88" cy="767.30" r="3.1"/><circle cx="966.79" cy="936.70" r="3.1"/><circle cx="1003.70" cy="877.80" r="3.1"/><circle cx="1040.61" cy="1001.00" r="3.1"/><circle cx="1077.52" cy="976.20" r="3.1"/><circle cx="1114.42" cy="817.00" r="3.1"/><circle cx="1151.33" cy="888.00" r="3.1"/><circle cx="1188.24" cy="718.30" r="3.1"/><circle cx="1225.15" cy="732.00" r="3.1"/><circle cx="1262.06" cy="858.50" r="3.1"/><circle cx="1298.97" cy="666.90" r="3.1"/><circle cx="1335.88" cy="681.20" r="3.1"/><circle cx="1372.79" cy="685.10" r="3.1"/><circle cx="1409.70" cy="700.90" r="3.1"/><circle cx="1446.61" cy="737.80" r="3.1"/><circle cx="1483.52" cy="830.50" r="3.1"/></g>
<path d="M126.5 452.0V1079.6M125.9 1079.0H1548.4M121.7 1070.03H126.5M119.3 1049.60H128.9M121.7 1029.17H126.5M121.7 1008.75H126.5M121.7 988.32H126.5M121.7 967.90H126.5M119.3 947.47H128.9M121.7 927.04H126.5M121.7 906.62H126.5M121.7 886.19H126.5M121.7 865.77H126.5M119.3 845.34H128.9M121.7 824.91H126.5M121.7 804.49H126.5M121.7 784.06H126.5M121.7 763.64H126.5M119.3 743.21H128.9M121.7 722.78H126.5M121.7 702.36H126.5M121.7 681.93H126.5M121.7 661.51H126.5M119.3 641.08H128.9M121.7 620.65H126.5M121.7 600.23H126.5M121.7 579.80H126.5M121.7 559.38H126.5M119.3 538.95H128.9M121.7 518.52H126.5M121.7 498.10H126.5M121.7 477.67H126.5M121.7 457.25H126.5M154.79 1079.0V1083.8M191.70 1076.6V1086.2M228.61 1079.0V1083.8M265.52 1079.0V1083.8M302.43 1079.0V1083.8M339.34 1079.0V1083.8M376.25 1076.6V1086.2M413.15 1079.0V1083.8M450.06 1079.0V1083.8M486.97 1079.0V1083.8M523.88 1079.0V1083.8M560.79 1076.6V1086.2M597.70 1079.0V1083.8M634.61 1079.0V1083.8M671.52 1079.0V1083.8M708.43 1079.0V1083.8M745.34 1076.6V1086.2M782.24 1079.0V1083.8M819.15 1079.0V1083.8M856.06 1079.0V1083.8M892.97 1079.0V1083.8M929.88 1076.6V1086.2M966.79 1079.0V1083.8M1003.70 1079.0V1083.8M1040.61 1079.0V1083.8M1077.52 1079.0V1083.8M1114.42 1076.6V1086.2M1151.33 1079.0V1083.8M1188.24 1079.0V1083.8M1225.15 1079.0V1083.8M1262.06 1079.0V1083.8M1298.97 1076.6V1086.2M1335.88 1079.0V1083.8M1372.79 1079.0V1083.8M1409.70 1079.0V1083.8M1446.61 1079.0V1083.8M1483.52 1076.6V1086.2M1520.42 1079.0V1083.8" stroke="#000" stroke-width="1.2" fill="none"/>
<g font-family="'Liberation Serif', serif" font-size="13.2" fill="#444"><text x="113" y="1054.70" text-anchor="end">0</text><text x="113" y="952.57" text-anchor="end">1000</text><text x="113" y="850.44" text-anchor="end">2000</text><text x="113" y="748.31" text-anchor="end">3000</text><text x="113" y="646.18" text-anchor="end">4000</text><text x="113" y="544.05" text-anchor="end">5000</text><text x="191.70" y="1102" text-anchor="middle">1990</text><text x="376.25" y="1102" text-anchor="middle">1995</text><text x="560.79" y="1102" text-anchor="middle">2000</text><text x="745.34" y="1102" text-anchor="middle">2005</text><text x="929.88" y="1102" text-anchor="middle">2010</text><text x="1114.42" y="1102" text-anchor="middle">2015</text><text x="1298.97" y="1102" text-anchor="middle">2020</text><text x="1483.52" y="1102" text-anchor="middle">2025</text></g>
<text x="837" y="1126" text-anchor="middle" font-family="'Liberation Serif', serif" font-size="15.6" font-style="italic" fill="#444">year</text>
<text transform="translate(74 765.5) rotate(-90)" text-anchor="middle" font-family="'Liberation Serif', serif" font-size="15.6" font-style="italic" fill="#444">km</text>
<text x="127" y="442" font-family="'Liberation Serif', serif" font-size="15.6" font-weight="700" fill="#444">Total km per year</text>
<rect x="138.5" y="464.4" width="161.2" height="351.6" fill="#ffffff" stroke="#eeeeee" stroke-width="1.2"/>
<path d="M149.6 488.20H175.7" stroke="#1f77b4" stroke-width="2.4"/>
<circle cx="162.6" cy="488.20" r="5.25" fill="#1f77b4"/>
<text x="181" y="493.80" font-family="'Liberation Serif', serif" font-size="15.6" fill="#444">Run</text>
<path d="M149.6 515.86H175.7" stroke="#ff7f0e" stroke-width="2.4"/>
<circle cx="162.6" cy="515.86" r="5.25" fill="#ff7f0e"/>
<text x="181" y="521.46" font-family="'Liberation Serif', serif" font-size="15.6" fill="#444">Ride</text>
<path d="M149.6 543.52H175.7" stroke="#2ca02c" stroke-width="2.4"/>
<circle cx="162.6" cy="543.52" r="5.25" fill="#2ca02c"/>
<text x="181" y="549.12" font-family="'Liberation Serif', serif" font-size="15.6" fill="#444">Ski skate</text>
<path d="M149.6 571.18H175.7" stroke="#d62728" stroke-width="2.4"/>
<circle cx="162.6" cy="571.18" r="5.25" fill="#d62728"/>
<text x="181" y="576.78" font-family="'Liberation Serif', serif" font-size="15.6" fill="#444">Swim</text>
<path d="M149.6 598.84H175.7" stroke="#9467bd" stroke-width="2.4"/>
<circle cx="162.6" cy="598.84" r="5.25" fill="#9467bd"/>
<text x="181" y="604.44" font-family="'Liberation Serif', serif" font-size="15.6" fill="#444">Row</text>
<path d="M149.6 626.50H175.7" stroke="#8c564b" stroke-width="2.4"/>
<circle cx="162.6" cy="626.50" r="5.25" fill="#8c564b"/>
<text x="181" y="632.10" font-family="'Liberation Serif', serif" font-size="15.6" fill="#444">Hike</text>
<path d="M149.6 654.16H175.7" stroke="#e377c2" stroke-width="2.4"/>
<circle cx="162.6" cy="654.16" r="5.25" fill="#e377c2"/>
<text x="181" y="659.76" font-family="'Liberation Serif', serif" font-size="15.6" fill="#444">Paddleboard</text>
<path d="M149.6 681.82H175.7" stroke="#7f7f7f" stroke-width="2.4"/>
<circle cx="162.6" cy="681.82" r="5.25" fill="#7f7f7f"/>
<text x="181" y="687.42" font-family="'Liberation Serif', serif" font-size="15.6" fill="#444">Ski classic</text>
<path d="M149.6 709.48H175.7" stroke="#bcbd22" stroke-width="2.4"/>
<circle cx="162.6" cy="709.48" r="5.25" fill="#bcbd22"/>
<text x="181" y="715.08" font-family="'Liberation Serif', serif" font-size="15.6" fill="#444">Roller ski skate</text>
<path d="M149.6 737.14H175.7" stroke="#17becf" stroke-width="2.4"/>
<circle cx="162.6" cy="737.14" r="5.25" fill="#17becf"/>
<text x="181" y="742.74" font-family="'Liberation Serif', serif" font-size="15.6" fill="#444">Concept2</text>
<path d="M149.6 764.80H175.7" stroke="#1f77b4" stroke-width="2.4"/>
<circle cx="162.6" cy="764.80" r="5.25" fill="#1f77b4"/>
<text x="181" y="770.40" font-family="'Liberation Serif', serif" font-size="15.6" fill="#444">Roller ski classic</text>
<path d="M151.5 792.46H174.6" stroke="#000" stroke-width="3.8" stroke-dasharray="1.4 5.8" stroke-linecap="round"/>
<circle cx="162.6" cy="792.46" r="5.5" fill="#000"/>
<text x="181" y="798.06" font-family="'Liberation Serif', serif" font-size="15.6" fill="#444">UKM</text>
<path d="M1292 1133H1328M1512 1133H1548" stroke="#26aae1" stroke-width="2.4"/>
<path d="M1364.2 1144V1156M1402.4 1144V1156M1511.7 1144V1156" stroke="#d0d3d5" stroke-width="1.2"/>
<path d="M1309 1144.5V1159.5M1301.5 1152H1316.5" stroke="#a1a6a9" stroke-width="1.8" fill="none"/><path d="M1306 1147L1309 1143.5L1312 1147ZM1306 1157L1309 1160.5L1312 1157ZM1304 1149L1300.5 1152L1304 1155ZM1314 1149L1317.5 1152L1314 1155Z" fill="#a1a6a9" stroke="#a1a6a9" stroke-width="1" stroke-linejoin="round"/><path d="M1340 1159H1337V1144H1352V1148" stroke="#a1a6a9" stroke-width="1.8" fill="none" stroke-dasharray="3 2"/><circle cx="1346.5" cy="1153.5" r="4.3" stroke="#a1a6a9" stroke-width="1.8" fill="none"/><path d="M1349.7 1156.7L1353.5 1160.5" stroke="#a1a6a9" stroke-width="2" stroke-linecap="round"/><rect x="1372" y="1144.5" width="7" height="15" rx="3.5" stroke="#a1a6a9" stroke-width="1.6" fill="none"/><path d="M1375.5 1148V1153" stroke="#a1a6a9" stroke-width="1.2"/><circle cx="1387" cy="1149" r="4.5" stroke="#a1a6a9" stroke-width="1.8" fill="none"/><path d="M1384.6 1153L1381.5 1160.5" stroke="#a1a6a9" stroke-width="2" stroke-linecap="round"/><path d="M1419 1144V1155M1414.5 1150.5L1419 1155L1423.5 1150.5M1411.5 1154V1159.5H1426.5V1154" stroke="#a1a6a9" stroke-width="1.8" fill="none" stroke-linecap="round" stroke-linejoin="round"/><path d="M1462.8 1150A7 7 0 0 0 1449.5 1149M1449.2 1154A7 7 0 0 0 1462.5 1155" stroke="#a1a6a9" stroke-width="1.8" fill="none" stroke-linecap="round"/><path d="M1448.5 1145V1149.5H1453M1463.5 1159V1154.5H1459" stroke="#a1a6a9" stroke-width="1.8" fill="none" stroke-linecap="round" stroke-linejoin="round"/><circle cx="1492" cy="1152" r="7.3" stroke="#a1a6a9" stroke-width="1.6" fill="none"/><path d="M1489.5 1149.8A2.6 2.6 0 1 1 1493.2 1152.2Q1492 1153 1492 1154.5" stroke="#a1a6a9" stroke-width="1.6" fill="none" stroke-linecap="round"/><circle cx="1492" cy="1156.5" r="0.9" fill="#a1a6a9"/><path d="M1523 1145.5H1535A1.5 1.5 0 0 1 1536.5 1147V1155A1.5 1.5 0 0 1 1535 1156.5H1531L1529 1159L1527 1156.5H1523A1.5 1.5 0 0 1 1521.5 1155V1147A1.5 1.5 0 0 1 1523 1145.5Z" stroke="#a1a6a9" stroke-width="1.6" fill="none" stroke-linejoin="round"/><path d="M1525 1149.7H1533M1525 1153H1531" stroke="#a1a6a9" stroke-width="1.5"/>
</svg>
<div style="position:absolute;left:30px;top:1227px;width:373px;height:164px;box-sizing:border-box;background:#1f2937;border:1px solid #263447;border-radius:9.6px"></div>
<div style="position:absolute;left:55.5px;top:1251px;height:20px;display:flex;align-items:center;font-family:'Liberation Sans', sans-serif;font-size:14.4px;letter-spacing:0.576px;color:#9ca3af;white-space:nowrap">TOTAL ACTIVITIES<svg style="margin-left:9.5px;position:relative;top:-1.5px" width="24" height="24" viewBox="0 0 24 24" fill="none" stroke="#d1d5db" stroke-width="1.5" stroke-linecap="round" stroke-linejoin="round"><path d="M3 12a9 9 0 1 0 18 0a9 9 0 0 0 -18 0"/><path d="M12 9h.01"/><path d="M11 12h1v4h1"/></svg></div>
<div style="position:absolute;left:55.50px;top:1275.82px;font-family:'Liberation Sans', sans-serif;font-size:28.8px;line-height:28.8px;font-weight:700;color:#f3f4f6;white-space:nowrap;">5,216</div>
<div style="position:absolute;left:55.50px;top:1333.06px;font-family:'Liberation Sans', sans-serif;font-size:18px;line-height:18px;font-weight:400;color:#f3f4f6;white-space:nowrap;">Progress this year</div>
<div style="position:absolute;right:1240.00px;top:1333.06px;font-family:'Liberation Sans', sans-serif;font-size:18px;line-height:18px;font-weight:400;color:#2fb344;white-space:nowrap;">514 activities</div>
<div style="position:absolute;left:55px;top:1366px;width:323px;height:5px;background:#374151;border-radius:3px;overflow:hidden"></div>
<div style="position:absolute;left:55px;top:1366px;width:32px;height:5px;background:#066fd1;border-radius:3px 0 0 3px"></div>
<div style="position:absolute;left:422px;top:1227px;width:373px;height:164px;box-sizing:border-box;background:#1f2937;border:1px solid #263447;border-radius:9.6px"></div>
<div style="position:absolute;left:447.5px;top:1251px;height:20px;display:flex;align-items:center;font-family:'Liberation Sans', sans-serif;font-size:14.4px;letter-spacing:0.576px;color:#9ca3af;white-space:nowrap">TOTAL UKM<svg style="margin-left:9.5px;position:relative;top:-1.5px" width="24" height="24" viewBox="0 0 24 24" fill="none" stroke="#d1d5db" stroke-width="1.5" stroke-linecap="round" stroke-linejoin="round"><path d="M3 12a9 9 0 1 0 18 0a9 9 0 0 0 -18 0"/><path d="M12 9h.01"/><path d="M11 12h1v4h1"/></svg></div>
<div style="position:absolute;left:447.50px;top:1275.82px;font-family:'Liberation Sans', sans-serif;font-size:28.8px;line-height:28.8px;font-weight:700;color:#f3f4f6;white-space:nowrap;">59,566</div>
<div style="position:absolute;left:447.50px;top:1333.06px;font-family:'Liberation Sans', sans-serif;font-size:18px;line-height:18px;font-weight:400;color:#f3f4f6;white-space:nowrap;">This year</div>
<div style="position:absolute;right:848.00px;top:1333.06px;font-family:'Liberation Sans', sans-serif;font-size:18px;line-height:18px;font-weight:400;color:#2fb344;white-space:nowrap;">2,142 ukm</div>
<div style="position:absolute;left:447px;top:1366px;width:323px;height:5px;background:#374151;border-radius:3px;overflow:hidden"></div>
<div style="position:absolute;left:447px;top:1366px;width:12px;height:5px;background:#2fb344;border-radius:3px 0 0 3px"></div>
<div style="position:absolute;left:815px;top:1227px;width:373px;height:164px;box-sizing:border-box;background:#1f2937;border:1px solid #263447;border-radius:9.6px"></div>
<div style="position:absolute;left:840.5px;top:1251px;height:20px;display:flex;align-items:center;font-family:'Liberation Sans', sans-serif;font-size:14.4px;letter-spacing:0.576px;color:#9ca3af;white-space:nowrap">TOTAL TRAINING TIME<svg style="margin-left:9.5px;position:relative;top:-1.5px" width="24" height="24" viewBox="0 0 24 24" fill="none" stroke="#d1d5db" stroke-width="1.5" stroke-linecap="round" stroke-linejoin="round"><path d="M3 12a9 9 0 1 0 18 0a9 9 0 0 0 -18 0"/><path d="M12 9h.01"/><path d="M11 12h1v4h1"/></svg></div>
<div style="position:absolute;left:840.50px;top:1275.82px;font-family:'Liberation Sans', sans-serif;font-size:28.8px;line-height:28.8px;font-weight:700;color:#f3f4f6;white-space:nowrap;">21046h 31'</div>
<div style="position:absolute;left:840.50px;top:1333.06px;font-family:'Liberation Sans', sans-serif;font-size:18px;line-height:18px;font-weight:400;color:#f3f4f6;white-space:nowrap;">This year</div>
<div style="position:absolute;right:460.00px;top:1333.06px;font-family:'Liberation Sans', sans-serif;font-size:18px;line-height:18px;font-weight:400;color:#2fb344;white-space:nowrap;">338<b>h</b> 00'</div>
<div style="position:absolute;left:840px;top:1366px;width:323px;height:5px;background:#374151;border-radius:3px;overflow:hidden"></div>
<div style="position:absolute;left:840px;top:1366px;width:5px;height:5px;background:#4299e1;border-radius:3px 0 0 3px"></div>
<div style="position:absolute;left:1207px;top:1227px;width:373px;height:164px;box-sizing:border-box;background:#1f2937;border:1px solid #263447;border-radius:9.6px"></div>
<div style="position:absolute;left:1232.5px;top:1251px;height:20px;display:flex;align-items:center;font-family:'Liberation Sans', sans-serif;font-size:14.4px;letter-spacing:0.576px;color:#9ca3af;white-space:nowrap">YEARS ACTIVE<svg style="margin-left:9.5px;position:relative;top:-1.5px" width="24" height="24" viewBox="0 0 24 24" fill="none" stroke="#d1d5db" stroke-width="1.5" stroke-linecap="round" stroke-linejoin="round"><path d="M3 12a9 9 0 1 0 18 0a9 9 0 0 0 -18 0"/><path d="M12 9h.01"/><path d="M11 12h1v4h1"/></svg></div>
<div style="position:absolute;left:1232.50px;top:1275.82px;font-family:'Liberation Sans', sans-serif;font-size:28.8px;line-height:28.8px;font-weight:700;color:#f3f4f6;white-space:nowrap;">38</div>
<div style="position:absolute;left:1232.50px;top:1333.06px;font-family:'Liberation Sans', sans-serif;font-size:18px;line-height:18px;font-weight:400;color:#f3f4f6;white-space:nowrap;">Range</div>
<div style="position:absolute;right:63.00px;top:1333.06px;font-family:'Liberation Sans', sans-serif;font-size:18px;line-height:18px;font-weight:400;color:#6b7280;white-space:nowrap;">1976 - 2025</div>
<div style="position:absolute;left:1232px;top:1366px;width:323px;height:5px;background:#374151;border-radius:3px;overflow:hidden"></div>
<div style="position:absolute;left:1232px;top:1366px;width:123px;height:5px;background:#f59f00;border-radius:3px 0 0 3px"></div>
<div style="position:absolute;left:30px;top:1430px;width:765px;height:329px;box-sizing:border-box;background:#1f2937;border:1px solid #263447;border-radius:9.6px"></div>
<div style="position:absolute;left:55.50px;top:1452.45px;font-family:'Liberation Sans', sans-serif;font-size:19.2px;line-height:19.2px;font-weight:400;color:#f3f4f6;white-space:nowrap;">Sport Distribution by Distance</div>
<div style="position:absolute;left:31px;top:1498px;width:763px;height:1px;background:#263447"></div>
<div style="position:absolute;left:55px;top:1518px;width:714px;height:39px;border-radius:7px;overflow:hidden;display:flex"><div style="width:354.1px;height:100%;background:#066fd1;flex:none;margin-right:2.2px"></div><div style="width:250.7px;height:100%;background:#2fb344;flex:none;margin-right:2.2px"></div><div style="width:37.6px;height:100%;background:#4299e1;flex:none;margin-right:2.2px"></div><div style="width:19.8px;height:100%;background:#f59f00;flex:none;margin-right:2.2px"></div><div style="width:16.8px;height:100%;background:#d63939;flex:none;margin-right:2.2px"></div><div style="width:14.9px;height:100%;background:#9ca3af;flex:none;margin-right:2.2px"></div><div style="width:1.4px;height:100%;background:#ae3ec9;flex:none;margin-right:2.2px"></div><div style="width:1.5px;height:100%;background:#d6336c;flex:none;margin-right:2.2px"></div></div>
<div style="position:absolute;left:55.00px;top:1579.86px;font-family:'Liberation Sans', sans-serif;font-size:18px;line-height:18px;font-weight:400;color:#f3f4f6;white-space:nowrap;"><span style="display:inline-flex;align-items:baseline;margin-right:19.6px"><span style="display:inline-block;width:13.5px;height:13.5px;border-radius:4px;background:#066fd1;margin-right:10px;position:relative;top:1px"></span><span style="color:#f3f4f6">Ride</span><span style="color:#6b7280;margin-left:9.6px">39,988 km (49.8%)</span></span><span style="display:inline-flex;align-items:baseline;margin-right:19.6px"><span style="display:inline-block;width:13.5px;height:13.5px;border-radius:4px;background:#2fb344;margin-right:10px;position:relative;top:1px"></span><span style="color:#f3f4f6">Run</span><span style="color:#6b7280;margin-left:9.6px">28,365 km (35.3%)</span></span><span style="display:inline-flex;align-items:baseline;margin-right:19.6px"><span style="display:inline-block;width:13.5px;height:13.5px;border-radius:4px;background:#4299e1;margin-right:10px;position:relative;top:1px"></span><span style="color:#f3f4f6">Hike</span><span style="color:#6b7280;margin-left:9.6px">4,455 km (5.6%)</span></span></div>
<div style="position:absolute;left:55.00px;top:1606.91px;font-family:'Liberation Sans', sans-serif;font-size:18px;line-height:18px;font-weight:400;color:#f3f4f6;white-space:nowrap;"><span style="display:inline-flex;align-items:baseline;margin-right:19.6px"><span style="display:inline-block;width:13.5px;height:13.5px;border-radius:4px;background:#f59f00;margin-right:10px;position:relative;top:1px"></span><span style="color:#f3f4f6">Ski skate</span><span style="color:#6b7280;margin-left:9.6px">2,465 km (3.1%)</span></span><span style="display:inline-flex;align-items:baseline;margin-right:19.6px"><span style="display:inline-block;width:13.5px;height:13.5px;border-radius:4px;background:#d63939;margin-right:10px;position:relative;top:1px"></span><span style="color:#f3f4f6">Row</span><span style="color:#6b7280;margin-left:9.6px">2,175 km (2.7%)</span></span></div>
<div style="position:absolute;left:55.00px;top:1633.96px;font-family:'Liberation Sans', sans-serif;font-size:18px;line-height:18px;font-weight:400;color:#f3f4f6;white-space:nowrap;"><span style="display:inline-flex;align-items:baseline;margin-right:19.6px"><span style="display:inline-block;width:13.5px;height:13.5px;border-radius:4px;background:#9ca3af;margin-right:10px;position:relative;top:1px"></span><span style="color:#f3f4f6">Roller ski skate</span><span style="color:#6b7280;margin-left:9.6px">1,858 km (2.3%)</span></span><span style="display:inline-flex;align-items:baseline;margin-right:19.6px"><span style="display:inline-block;width:13.5px;height:13.5px;border-radius:4px;background:#ae3ec9;margin-right:10px;position:relative;top:1px"></span><span style="color:#f3f4f6">Swim</span><span style="color:#6b7280;margin-left:9.6px">387 km (0.5%)</span></span></div>
<div style="position:absolute;left:55.00px;top:1661.01px;font-family:'Liberation Sans', sans-serif;font-size:18px;line-height:18px;font-weight:400;color:#f3f4f6;white-space:nowrap;"><span style="display:inline-flex;align-items:baseline;margin-right:19.6px"><span style="display:inline-block;width:13.5px;height:13.5px;border-radius:4px;background:#d6336c;margin-right:10px;position:relative;top:1px"></span><span style="color:#f3f4f6">Concept2</span><span style="color:#6b7280;margin-left:9.6px">359 km (0.4%)</span></span><span style="display:inline-flex;align-items:baseline;margin-right:19.6px"><span style="display:inline-block;width:13.5px;height:13.5px;border-radius:4px;background:#066fd1;margin-right:10px;position:relative;top:1px"></span><span style="color:#f3f4f6">Ski classic</span><span style="color:#6b7280;margin-left:9.6px">170 km (0.2%)</span></span></div>
<div style="position:absolute;left:55.00px;top:1688.06px;font-family:'Liberation Sans', sans-serif;font-size:18px;line-height:18px;font-weight:400;color:#f3f4f6;white-space:nowrap;"><span style="display:inline-flex;align-items:baseline;margin-right:19.6px"><span style="display:inline-block;width:13.5px;height:13.5px;border-radius:4px;background:#2fb344;margin-right:10px;position:relative;top:1px"></span><span style="color:#f3f4f6">Paddleboard</span><span style="color:#6b7280;margin-left:9.6px">25 km (0.0%)</span></span><span style="display:inline-flex;align-items:baseline;margin-right:19.6px"><span style="display:inline-block;width:13.5px;height:13.5px;border-radius:4px;background:#4299e1;margin-right:10px;position:relative;top:1px"></span><span style="color:#f3f4f6">Roller ski classic</span><span style="color:#6b7280;margin-left:9.6px">15 km (0.0%)</span></span></div>
<div style="position:absolute;left:55.00px;top:1715.11px;font-family:'Liberation Sans', sans-serif;font-size:18px;line-height:18px;font-weight:400;color:#f3f4f6;white-space:nowrap;"><span style="display:inline-flex;align-items:baseline;margin-right:19.6px"><span style="display:inline-block;width:13.5px;height:13.5px;border-radius:4px;background:#f59f00;margin-right:10px;position:relative;top:1px"></span><span style="color:#f3f4f6">Kayak</span><span style="color:#6b7280;margin-left:9.6px">0 km (0.0%)</span></span></div>
<div style="position:absolute;left:815px;top:1430px;width:765px;height:329px;box-sizing:border-box;background:#1f2937;border:1px solid #263447;border-radius:9.6px"></div>
<div style="position:absolute;left:840.50px;top:1452.45px;font-family:'Liberation Sans', sans-serif;font-size:19.2px;line-height:19.2px;font-weight:400;color:#f3f4f6;white-space:nowrap;">Sport Distribution by Time</div>
<div style="position:absolute;left:816px;top:1498px;width:763px;height:1px;background:#263447"></div>
<div style="position:absolute;left:840px;top:1518px;width:714px;height:39px;border-radius:7px;overflow:hidden;display:flex"><div style="width:510.3px;height:100%;background:#2fb344;flex:none;margin-right:2.45px"></div><div style="width:82.4px;height:100%;background:#066fd1;flex:none;margin-right:2.45px"></div><div style="width:50.4px;height:100%;background:#f59f00;flex:none;margin-right:2.45px"></div><div style="width:31.5px;height:100%;background:#4299e1;flex:none;margin-right:2.45px"></div><div style="width:15.5px;height:100%;background:#d63939;flex:none;margin-right:2.45px"></div><div style="width:3px;height:100%;background:#9ca3af;flex:none;margin-right:2.45px"></div><div style="width:3px;height:100%;background:#ae3ec9;flex:none;margin-right:2.45px"></div></div>
<div style="position:absolute;left:840.00px;top:1579.86px;font-family:'Liberation Sans', sans-serif;font-size:18px;line-height:18px;font-weight:400;color:#f3f4f6;white-space:nowrap;"><span style="display:inline-flex;align-items:baseline;margin-right:19.6px"><span style="display:inline-block;width:13.5px;height:13.5px;border-radius:4px;background:#2fb344;margin-right:10px;position:relative;top:1px"></span><span style="color:#f3f4f6">Run</span><span style="color:#6b7280;margin-left:9.6px">15104<b style="font-weight:700">h</b> 18'&nbsp; (71.8%)</span></span><span style="display:inline-flex;align-items:baseline;margin-right:19.6px"><span style="display:inline-block;width:13.5px;height:13.5px;border-radius:4px;background:#066fd1;margin-right:10px;position:relative;top:1px"></span><span style="color:#f3f4f6">Ride</span><span style="color:#6b7280;margin-left:9.6px">2514<b style="font-weight:700">h</b> 44'&nbsp; (11.9%)</span></span><span style="display:inline-flex;align-items:baseline;margin-right:19.6px"><span style="display:inline-block;width:13.5px;height:13.5px;border-radius:4px;background:#f59f00;margin-right:10px;position:relative;top:1px"></span><span style="color:#f3f4f6">Row</span><span style="color:#6b7280;margin-left:9.6px">1564<b style="font-weight:700">h</b> 03'&nbsp; (7.4%)</span></span></div>
<div style="position:absolute;left:840.00px;top:1606.91px;font-family:'Liberation Sans', sans-serif;font-size:18px;line-height:18px;font-weight:400;color:#f3f4f6;white-space:nowrap;"><span style="display:inline-flex;align-items:baseline;margin-right:19.6px"><span style="display:inline-block;width:13.5px;height:13.5px;border-radius:4px;background:#4299e1;margin-right:10px;position:relative;top:1px"></span><span style="color:#f3f4f6">Hike</span><span style="color:#6b7280;margin-left:9.6px">1018<b style="font-weight:700">h</b> 54'&nbsp; (4.8%)</span></span><span style="display:inline-flex;align-items:baseline;margin-right:19.6px"><span style="display:inline-block;width:13.5px;height:13.5px;border-radius:4px;background:#d63939;margin-right:10px;position:relative;top:1px"></span><span style="color:#f3f4f6">Ski skate</span><span style="color:#6b7280;margin-left:9.6px">526<b style="font-weight:700">h</b> 35'&nbsp; (2.5%)</span></span><span style="display:inline-flex;align-items:baseline;margin-right:19.6px"><span style="display:inline-block;width:13.5px;height:13.5px;border-radius:4px;background:#9ca3af;margin-right:10px;position:relative;top:1px"></span><span style="color:#f3f4f6">Swim</span><span style="color:#6b7280;margin-left:9.6px">149<b style="font-weight:700">h</b> 51'&nbsp; (0.7%)</span></span></div>
<div style="position:absolute;left:840.00px;top:1633.96px;font-family:'Liberation Sans', sans-serif;font-size:18px;line-height:18px;font-weight:400;color:#f3f4f6;white-space:nowrap;"><span style="display:inline-flex;align-items:baseline;margin-right:19.6px"><span style="display:inline-block;width:13.5px;height:13.5px;border-radius:4px;background:#ae3ec9;margin-right:10px;position:relative;top:1px"></span><span style="color:#f3f4f6">Roller ski skate</span><span style="color:#6b7280;margin-left:9.6px">110<b style="font-weight:700">h</b> 28'&nbsp; (0.5%)</span></span><span style="display:inline-flex;align-items:baseline;margin-right:19.6px"><span style="display:inline-block;width:13.5px;height:13.5px;border-radius:4px;background:#d6336c;margin-right:10px;position:relative;top:1px"></span><span style="color:#f3f4f6">Concept2</span><span style="color:#6b7280;margin-left:9.6px">25<b style="font-weight:700">h</b> 31'&nbsp; (0.1%)</span></span></div>
<div style="position:absolute;left:840.00px;top:1661.01px;font-family:'Liberation Sans', sans-serif;font-size:18px;line-height:18px;font-weight:400;color:#f3f4f6;white-space:nowrap;"><span style="display:inline-flex;align-items:baseline;margin-right:19.6px"><span style="display:inline-block;width:13.5px;height:13.5px;border-radius:4px;background:#2fb344;margin-right:10px;position:relative;top:1px"></span><span style="color:#f3f4f6">Ski classic</span><span style="color:#6b7280;margin-left:9.6px">19<b style="font-weight:700">h</b> 42'&nbsp; (0.1%)</span></span><span style="display:inline-flex;align-items:baseline;margin-right:19.6px"><span style="display:inline-block;width:13.5px;height:13.5px;border-radius:4px;background:#066fd1;margin-right:10px;position:relative;top:1px"></span><span style="color:#f3f4f6">Paddleboard</span><span style="color:#6b7280;margin-left:9.6px">9<b style="font-weight:700">h</b> 55'&nbsp; (0.0%)</span></span></div>
<div style="position:absolute;left:840.00px;top:1688.06px;font-family:'Liberation Sans', sans-serif;font-size:18px;line-height:18px;font-weight:400;color:#f3f4f6;white-space:nowrap;"><span style="display:inline-flex;align-items:baseline;margin-right:19.6px"><span style="display:inline-block;width:13.5px;height:13.5px;border-radius:4px;background:#f59f00;margin-right:10px;position:relative;top:1px"></span><span style="color:#f3f4f6">Kayak</span><span style="color:#6b7280;margin-left:9.6px">1<b style="font-weight:700">h</b> 15'&nbsp; (0.0%)</span></span><span style="display:inline-flex;align-items:baseline;margin-right:19.6px"><span style="display:inline-block;width:13.5px;height:13.5px;border-radius:4px;background:#4299e1;margin-right:10px;position:relative;top:1px"></span><span style="color:#f3f4f6">Roller ski classic</span><span style="color:#6b7280;margin-left:9.6px">1<b style="font-weight:700">h</b> 10'&nbsp; (0.0%)</span></span></div>
<div style="position:absolute;left:30px;top:1797px;width:373px;height:95px;box-sizing:border-box;background:#1f2937;border:1px solid #263447;border-radius:9.6px"></div>
<div style="position:absolute;left:50px;top:1820px;width:48px;height:49px;background:#066fd1;border-radius:5px"></div>
<svg style="position:absolute;left:60.20px;top:1830.70px;" width="27.6" height="27.6" viewBox="0 0 24 24" fill="none" stroke="#ffffff" stroke-width="1.6" stroke-linecap="round" stroke-linejoin="round"><path d="M3 12a9 9 0 1 0 18 0a9 9 0 0 0 -18 0"/><path d="M12 7v5l3 3"/></svg>
<div style="position:absolute;left:118.00px;top:1821.26px;font-family:'Liberation Sans', sans-serif;font-size:18px;line-height:18px;font-weight:400;color:#f3f4f6;white-space:nowrap;">Avg Activity Time</div>
<div style="position:absolute;left:118.00px;top:1849.06px;font-family:'Liberation Sans', sans-serif;font-size:18px;line-height:18px;font-weight:400;color:#6b7280;white-space:nowrap;">242 minutes</div>
<div style="position:absolute;left:422px;top:1797px;width:373px;height:95px;box-sizing:border-box;background:#1f2937;border:1px solid #263447;border-radius:9.6px"></div>
<div style="position:absolute;left:443px;top:1820px;width:48px;height:49px;background:#2fb344;border-radius:5px"></div>
<svg style="position:absolute;left:453.20px;top:1830.70px;" width="27.6" height="27.6" viewBox="0 0 24 24" fill="none" stroke="#ffffff" stroke-width="1.6" stroke-linecap="round" stroke-linejoin="round"><path d="M3 7l6 -3l6 3l6 -3v13l-6 3l-6 -3l-6 3v-13"/><path d="M9 4v13"/><path d="M15 7v13"/></svg>
<div style="position:absolute;left:510.00px;top:1821.26px;font-family:'Liberation Sans', sans-serif;font-size:18px;line-height:18px;font-weight:400;color:#f3f4f6;white-space:nowrap;">Avg Distance/Day</div>
<div style="position:absolute;left:510.00px;top:1849.06px;font-family:'Liberation Sans', sans-serif;font-size:18px;line-height:18px;font-weight:400;color:#6b7280;white-space:nowrap;">3.3 ukm</div>
<div style="position:absolute;left:815px;top:1797px;width:373px;height:95px;box-sizing:border-box;background:#1f2937;border:1px solid #263447;border-radius:9.6px"></div>
<div style="position:absolute;left:835px;top:1820px;width:48px;height:49px;background:#4299e1;border-radius:5px"></div>
<svg style="position:absolute;left:845.20px;top:1830.70px;" width="27.6" height="27.6" viewBox="0 0 24 24" fill="none" stroke="#ffffff" stroke-width="1.6" stroke-linecap="round" stroke-linejoin="round"><path d="M3 12a9 9 0 1 0 18 0a9 9 0 0 0 -18 0"/><path d="M12 9h.01"/><path d="M11 12h1v4h1"/></svg>
<div style="position:absolute;left:903.00px;top:1821.26px;font-family:'Liberation Sans', sans-serif;font-size:18px;line-height:18px;font-weight:400;color:#f3f4f6;white-space:nowrap;">Activities/Year</div>
<div style="position:absolute;left:903.00px;top:1849.06px;font-family:'Liberation Sans', sans-serif;font-size:18px;line-height:18px;font-weight:400;color:#6b7280;white-space:nowrap;">137 activities</div>
<div style="position:absolute;left:1207px;top:1797px;width:373px;height:95px;box-sizing:border-box;background:#1f2937;border:1px solid #263447;border-radius:9.6px"></div>
<div style="position:absolute;left:1227px;top:1820px;width:48px;height:49px;background:#f59f00;border-radius:5px"></div>
<svg style="position:absolute;left:1227px;top:1820px" width="48" height="49" viewBox="0 0 48 49"><path d="M12.9 24.1V17.3H13.6A3.55 3.55 0 0 0 20.7 17.3H21A3.55 3.55 0 0 0 28.1 17.3H28.4A3.55 3.55 0 0 0 35.5 17.3H36V24.1Z" fill="#fff"/><rect x="12.9" y="27" width="23.1" height="2" fill="#fff"/><rect x="12.9" y="32" width="23.1" height="4.1" fill="#fff"/><rect x="12.9" y="33.6" width="23.1" height="1" fill="#fbd9a0"/></svg>
<div style="position:absolute;left:1295.00px;top:1821.26px;font-family:'Liberation Sans', sans-serif;font-size:18px;line-height:18px;font-weight:400;color:#f3f4f6;white-space:nowrap;">Sport Variety</div>
<div style="position:absolute;left:1295.00px;top:1849.06px;font-family:'Liberation Sans', sans-serif;font-size:18px;line-height:18px;font-weight:400;color:#6b7280;white-space:nowrap;">25 different sports</div>
</body></html>
